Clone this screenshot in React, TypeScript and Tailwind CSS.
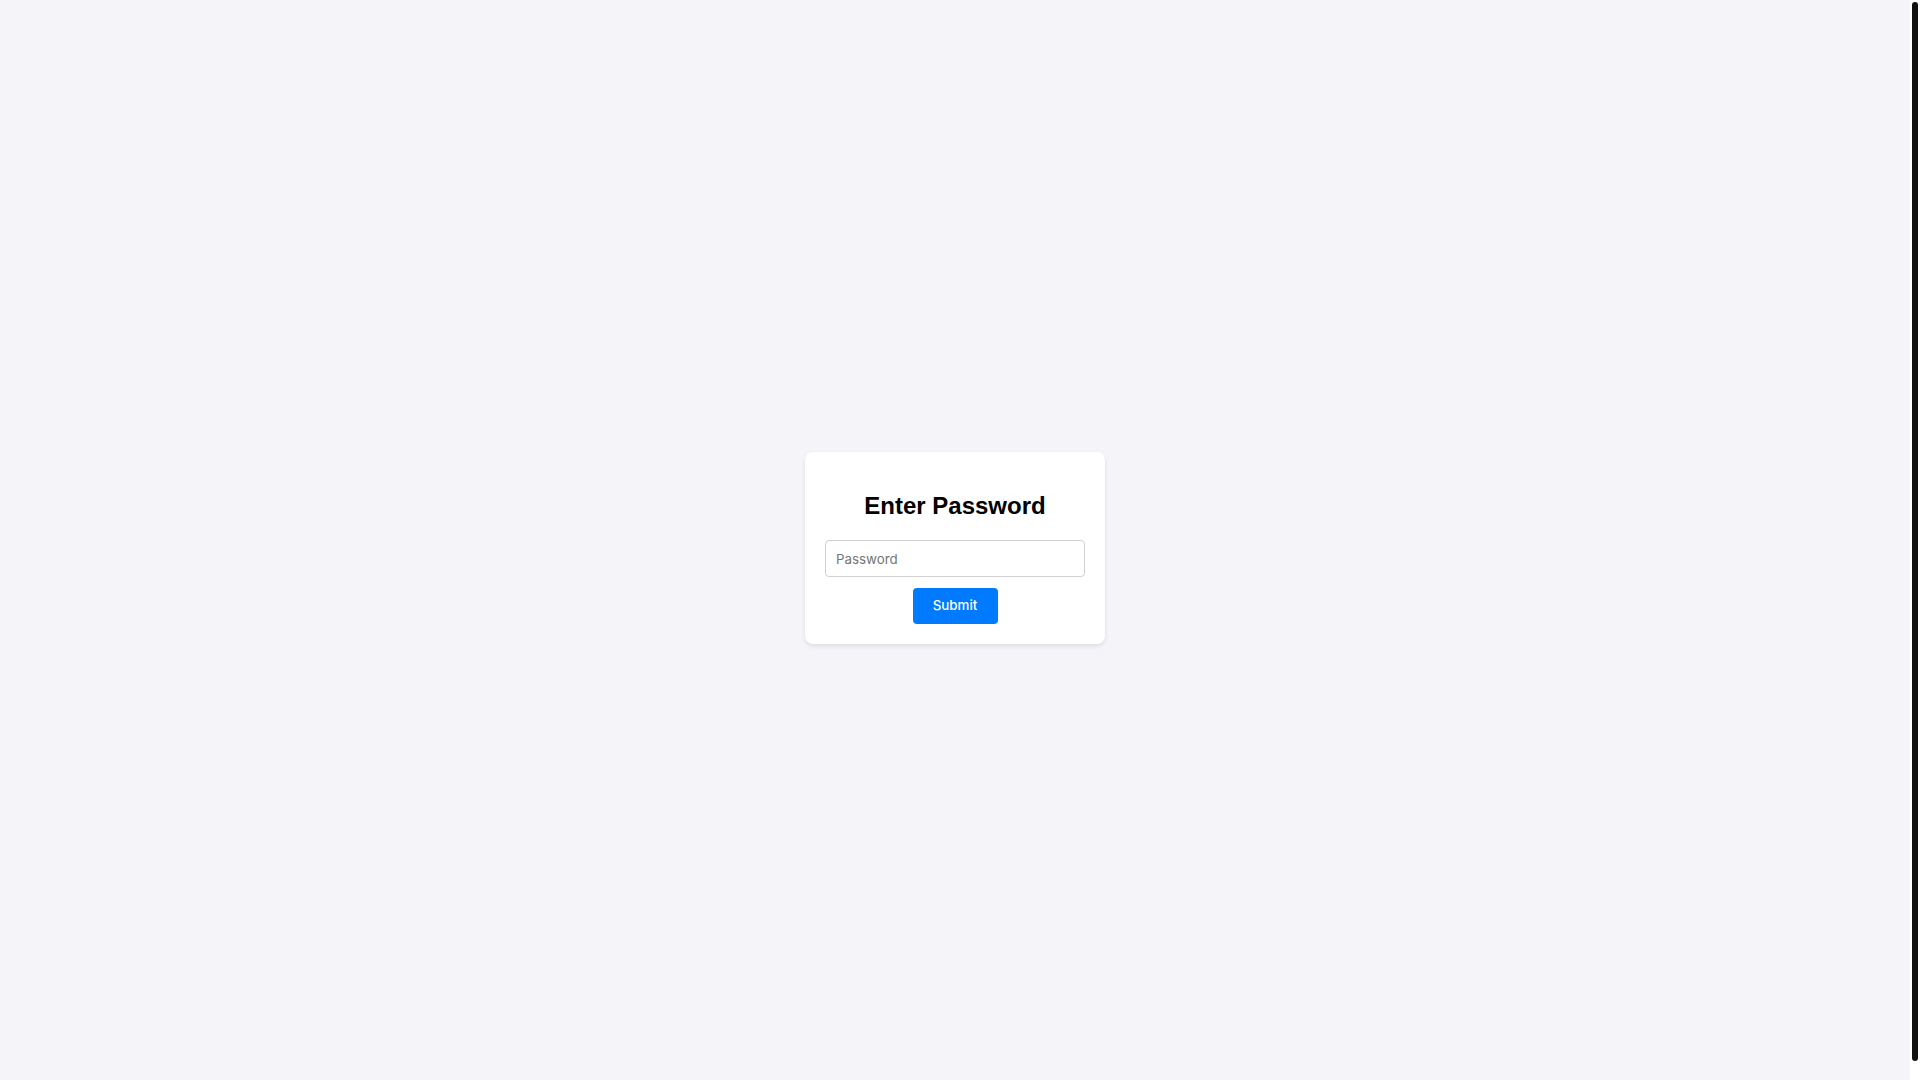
import React from "react";

export default function App() {
  return (
    <div className="flex h-[1080px] w-full bg-[#f4f4f9] overflow-hidden">
      <div className="flex h-[1096px] flex-1 items-center justify-center">
        <div className="flex w-[300px] flex-col items-center rounded-[8px] bg-white px-[20px] pt-[40px] pb-[20px] shadow-[0_2px_4px_rgba(0,0,0,0.1)]">
          <h2 className="h-[28px] text-[24px] leading-[28px] font-bold text-black [font-family:'Liberation_Sans',Arial,sans-serif]">
            Enter Password
          </h2>
          <input
            type="password"
            placeholder="Password"
            className="mt-[20px] h-[37px] w-full rounded-[4px] border border-[#d1d1d1] bg-white px-[10px] text-[13.33px] text-black placeholder:text-[#757575] outline-none [font-family:Inter,sans-serif]"
          />
          <button className="mt-[11px] h-[36px] w-[85px] rounded-[4px] bg-[#007bff] text-[13.33px] font-medium text-white [font-family:Inter,sans-serif]">
            Submit
          </button>
        </div>
      </div>
      <div className="flex w-[10px] shrink-0 justify-center bg-white pt-[2px] pb-[19px]">
        <div className="w-[6px] h-full rounded-[3px] bg-[#111111]" />
      </div>
    </div>
  );
}
